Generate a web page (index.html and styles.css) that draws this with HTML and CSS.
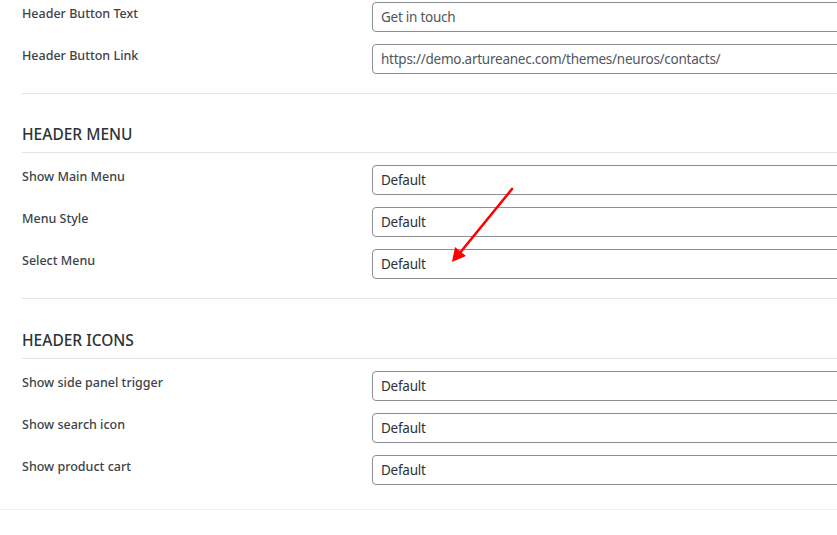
FILE: index.html
```html
<!DOCTYPE html>
<html lang="en">
<head>
    <meta charset="UTF-8">
    <meta name="viewport" content="width=device-width, initial-scale=1.0">
    <title>Header Options</title>
    <link rel="stylesheet" href="styles.css">
</head>
<body>
    <div class="options-box">
        <div class="section section-top">
            <div class="field">
                <label for="btnText">Header Button Text</label>
                <input type="text" id="btnText" value="Get in touch">
            </div>
            <div class="field">
                <label for="btnLink">Header Button Link</label>
                <input type="text" id="btnLink" value="https://demo.artureanec.com/themes/neuros/contacts/">
            </div>
        </div>

        <div class="section">
            <h3>HEADER MENU</h3>
            <div class="field">
                <label>Show Main Menu</label>
                <div class="select">Default</div>
            </div>
            <div class="field">
                <label>Menu Style</label>
                <div class="select">Default</div>
            </div>
            <div class="field">
                <label>Select Menu</label>
                <div class="select">Default</div>
            </div>
        </div>

        <div class="section section-last">
            <h3>HEADER ICONS</h3>
            <div class="field">
                <label>Show side panel trigger</label>
                <div class="select">Default</div>
            </div>
            <div class="field">
                <label>Show search icon</label>
                <div class="select">Default</div>
            </div>
            <div class="field">
                <label>Show product cart</label>
                <div class="select">Default</div>
            </div>
        </div>
    </div>

    <!-- red pointer drawn over the menu fields -->
    <svg class="pointer" width="837" height="535" viewBox="0 0 837 535">
        <line x1="512" y1="189" x2="459" y2="254" stroke="#f00" stroke-width="2.6" stroke-linecap="round"/>
        <polygon points="452,262 455,247 466,256" fill="#f00"/>
    </svg>
</body>
</html>
```

FILE: styles.css
```css
* {
    margin: 0;
    padding: 0;
    box-sizing: border-box;
}

body {
    font-family: "Noto Sans", "Open Sans", sans-serif;
    background-color: #fff;
    color: #3c434a;
    width: 837px;
    height: 535px;
    overflow: hidden;
    position: relative;
}

/* Options box */
.options-box {
    border-bottom: 1px solid #f0f0f1;
    padding-bottom: 24px;
}

.section {
    margin-left: 22px;
    padding-bottom: 19px;
    border-bottom: 1px solid #e2e4e7;
    display: flex;
    flex-direction: column;
    gap: 12px;
}

.section-top {
    padding-top: 2px;
}

.section-last {
    border-bottom: none;
    padding-bottom: 0;
}

.section h3 {
    margin-top: 30px;
    padding-bottom: 8px;
    border-bottom: 1px solid #e2e4e7;
    font-size: 15.5px;
    font-weight: 500;
    line-height: 20px;
    color: #2c3338;
}

.section-last h3 {
    margin-top: 31px;
}

/* Rows */
.field {
    display: flex;
    align-items: flex-start;
}

.field label {
    width: 350px;
    flex-shrink: 0;
    font-size: 12.5px;
    font-weight: 500;
    line-height: 18px;
    padding-top: 3px;
    color: #3c434a;
}

.field input,
.field .select {
    width: 520px;
    flex-shrink: 0;
    height: 30px;
    padding: 0 8px;
    border: 1px solid #8c8f94;
    border-radius: 4px;
    font-family: inherit;
    font-size: 13.5px;
    letter-spacing: -0.25px;
    line-height: 28px;
    color: #50575e;
    background: #fff;
}

.field .select {
    color: #2c3338;
}

.pointer {
    position: absolute;
    top: 0;
    left: 0;
    pointer-events: none;
}
```
